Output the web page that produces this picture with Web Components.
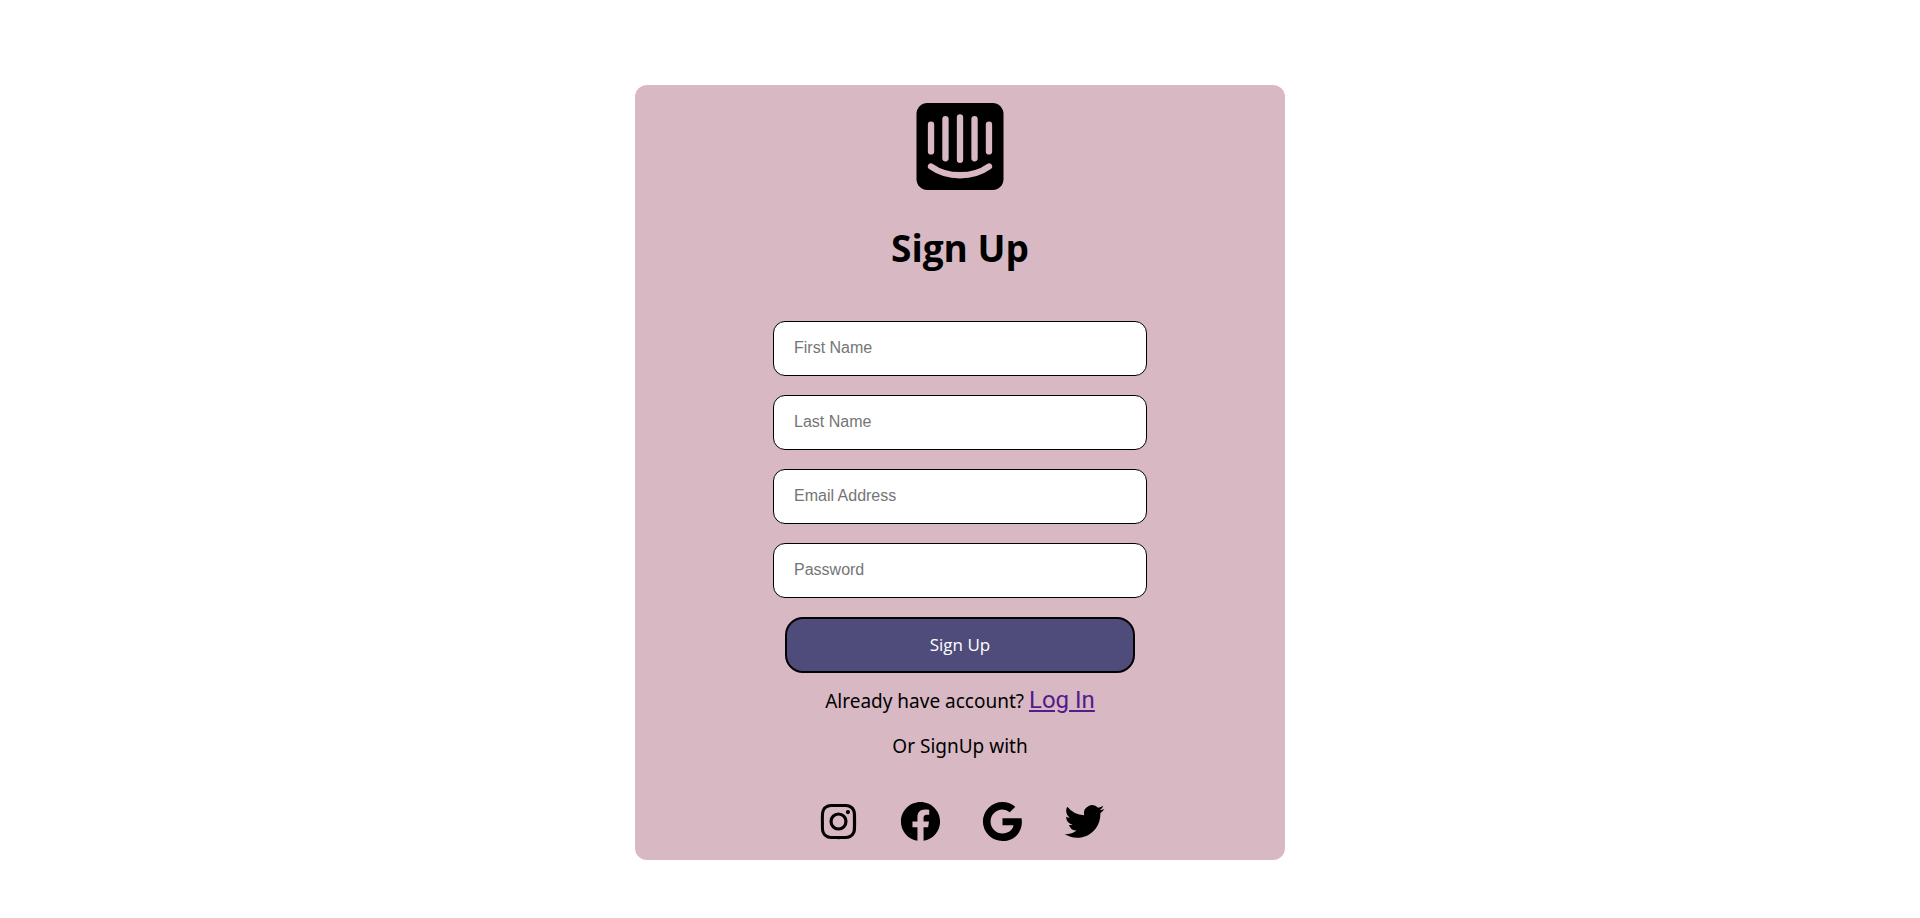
<!DOCTYPE html>
<html lang="en">
<head>
<meta charset="utf-8">
<title>Sign Up</title>
<style>
body { margin: 0; background: #fff; }
</style>
</head>
<body>
<signup-card>
  <app-logo slot="logo"></app-logo>
  <form-field name="firstname" label="First Name"></form-field>
  <form-field name="lastname" label="Last Name"></form-field>
  <form-field name="email" label="Email Address" type="email"></form-field>
  <form-field name="password" label="Password" type="password"></form-field>
  <submit-button>Sign Up</submit-button>
  <social-link slot="social" icon="instagram" label="Instagram"></social-link>
  <social-link slot="social" icon="facebook" label="Facebook"></social-link>
  <social-link slot="social" icon="google" label="Google"></social-link>
  <social-link slot="social" icon="twitter" label="Twitter"></social-link>
</signup-card>
<script>
class AppLogo extends HTMLElement {
  constructor() {
    super();
    this.attachShadow({ mode: 'open' }).innerHTML = `
      <style>:host{display:block;width:88px;height:87px} svg{display:block}</style>
      <svg width="88" height="87" viewBox="0 0 88 88" aria-hidden="true">
        <rect width="88" height="88" rx="11"/>
        <path d="M14.7 22v27M29.3 16.3V56M44 14.5v43M58.7 16.3V56M73.3 22v27M14.7 64.2C31 76 57 76 73.3 64.2" fill="none" stroke="#d8b8c3" stroke-width="6.4" stroke-linecap="round"/>
      </svg>`;
  }
}
class FormField extends HTMLElement {
  connectedCallback() {
    const label = this.getAttribute('label');
    const name = this.getAttribute('name');
    this.attachShadow({ mode: 'open' }).innerHTML = `
      <style>
        :host{display:block}
        input{display:block;box-sizing:border-box;width:100%;height:55px;padding:0 20px 2px;border:1px solid #000;border-radius:12px;background:#fff;font:16px/20px "Liberation Sans",Arial,sans-serif}
        input::placeholder{color:#757575}
      </style>
      <input id="${name}" name="${name}" type="${this.getAttribute('type') || 'text'}" placeholder="${label}" aria-label="${label}">`;
  }
}
class SubmitButton extends HTMLElement {
  constructor() {
    super();
    this.attachShadow({ mode: 'open' }).innerHTML = `
      <style>
        :host{display:block;padding:0 12px}
        button{display:block;width:100%;height:56px;padding:0;border:2px solid #000;border-radius:18px;background:#4f4c7b;color:#fff;font:17px/22px "Open Sans","Noto Sans",sans-serif;cursor:pointer}
      </style>
      <button type="submit"><slot></slot></button>`;
  }
}
const ICONS = {
  instagram: '<path d="M11.999 7.377a4.623 4.623 0 1 0 0 9.248 4.623 4.623 0 0 0 0-9.248zm0 7.627a3.004 3.004 0 1 1 0-6.008 3.004 3.004 0 0 1 0 6.008z"/><circle cx="16.806" cy="7.207" r="1.078"/><path d="M20.533 6.111A4.605 4.605 0 0 0 17.9 3.479a6.606 6.606 0 0 0-2.186-.42c-.963-.042-1.268-.054-3.71-.054s-2.755 0-3.71.054a6.554 6.554 0 0 0-2.184.42 4.6 4.6 0 0 0-2.633 2.632 6.585 6.585 0 0 0-.419 2.186c-.043.962-.056 1.267-.056 3.71 0 2.442 0 2.753.056 3.71.015.748.156 1.486.419 2.187a4.61 4.61 0 0 0 2.634 2.632 6.584 6.584 0 0 0 2.185.45c.963.042 1.268.055 3.71.055s2.755 0 3.71-.055a6.615 6.615 0 0 0 2.186-.419 4.613 4.613 0 0 0 2.633-2.633c.263-.7.404-1.438.419-2.186.043-.962.056-1.267.056-3.71s0-2.753-.056-3.71a6.581 6.581 0 0 0-.421-2.217zm-1.218 9.532a5.043 5.043 0 0 1-.311 1.688 2.987 2.987 0 0 1-1.712 1.711 4.985 4.985 0 0 1-1.67.311c-.95.044-1.218.055-3.654.055-2.438 0-2.687 0-3.655-.055a4.96 4.96 0 0 1-1.669-.311 2.985 2.985 0 0 1-1.719-1.711 5.08 5.08 0 0 1-.311-1.669c-.043-.95-.053-1.218-.053-3.654 0-2.437 0-2.686.053-3.655a5.038 5.038 0 0 1 .311-1.687c.305-.789.93-1.41 1.719-1.712a5.01 5.01 0 0 1 1.669-.311c.951-.043 1.218-.055 3.655-.055s2.687 0 3.654.055a4.96 4.96 0 0 1 1.67.311 2.991 2.991 0 0 1 1.712 1.712 5.08 5.08 0 0 1 .311 1.669c.043.951.055 1.218.055 3.655 0 2.436 0 2.698-.043 3.654z"/>',
  facebook: '<path d="M12.001 2.002c-5.522 0-9.999 4.477-9.999 9.999 0 4.99 3.656 9.126 8.437 9.879v-6.988h-2.54v-2.891h2.54V9.798c0-2.508 1.493-3.891 3.776-3.891 1.094 0 2.24.195 2.24.195v2.459h-1.264c-1.24 0-1.628.772-1.628 1.563v1.875h2.771l-.443 2.891h-2.328v6.988C18.344 21.129 22 16.992 22 12.001c0-5.522-4.477-9.999-9.999-9.999z"/>',
  google: '<path d="M12 2c2.55 0 4.8.94 6.55 2.49L15.7 7.34A5.6 5.6 0 0 0 12 5.9a6.1 6.1 0 1 0 0 12.2c3 0 5.1-1.6 5.65-4.15H12V10.4h9.7c.13.6.2 1.1.2 1.65C21.9 18.2 17.6 22 12 22A10 10 0 0 1 12 2z"/>',
  twitter: '<path d="M22.162 5.656a8.384 8.384 0 0 1-2.402.658A4.196 4.196 0 0 0 21.6 4c-.82.488-1.719.83-2.656 1.015a4.182 4.182 0 0 0-7.126 3.814 11.874 11.874 0 0 1-8.62-4.37 4.168 4.168 0 0 0-.566 2.103c0 1.45.738 2.731 1.86 3.481a4.168 4.168 0 0 1-1.894-.523v.052a4.185 4.185 0 0 0 3.355 4.101 4.21 4.21 0 0 1-1.89.072A4.185 4.185 0 0 0 7.97 16.65a8.394 8.394 0 0 1-6.191 1.732 11.83 11.83 0 0 0 6.41 1.88c7.693 0 11.9-6.373 11.9-11.9 0-.18-.005-.362-.013-.54a8.496 8.496 0 0 0 2.087-2.165z"/>'
};
class SocialLink extends HTMLElement {
  connectedCallback() {
    this.attachShadow({ mode: 'open' }).innerHTML = `
      <style>:host{display:block} a{display:block;color:#000} svg{display:block;fill:currentColor}</style>
      <a href="#" aria-label="${this.getAttribute('label')}"><svg width="47" height="47" viewBox="0 0 24 24" aria-hidden="true">${ICONS[this.getAttribute('icon')]}</svg></a>`;
  }
}
class SignupCard extends HTMLElement {
  constructor() {
    super();
    this.attachShadow({ mode: 'open' }).innerHTML = `
      <style>
        :host{display:block;padding:85px 16px 56px}
        main{display:flex;flex-direction:column;align-items:center;box-sizing:border-box;max-width:650px;margin:0 auto;padding:18px 16px 15px;border-radius:12px;background:#d8b8c3;color:#000}
        h1{margin:31px 0 46px;font:bold 37px/54px "Open Sans","Noto Sans",sans-serif}
        form{display:flex;flex-direction:column;gap:19px;width:100%;max-width:374px}
        p{margin:0;font:19px/28px "Trebuchet MS","Noto Sans",sans-serif}
        .login{margin-top:13px}
        .login a{font:24px/28px Roboto,sans-serif;color:#551a8b}
        .with{margin:17px 0 38px}
        nav{display:flex;gap:35px;margin-left:2px}
      </style>
      <main>
        <slot name="logo"></slot>
        <h1>Sign Up</h1>
        <form><slot></slot></form>
        <p class="login">Already have account? <a href="#">Log In</a></p>
        <p class="with">Or SignUp with</p>
        <nav aria-label="Social sign up"><slot name="social"></slot></nav>
      </main>`;
  }
}
customElements.define('app-logo', AppLogo);
customElements.define('form-field', FormField);
customElements.define('submit-button', SubmitButton);
customElements.define('social-link', SocialLink);
customElements.define('signup-card', SignupCard);
</script>
</body>
</html>
